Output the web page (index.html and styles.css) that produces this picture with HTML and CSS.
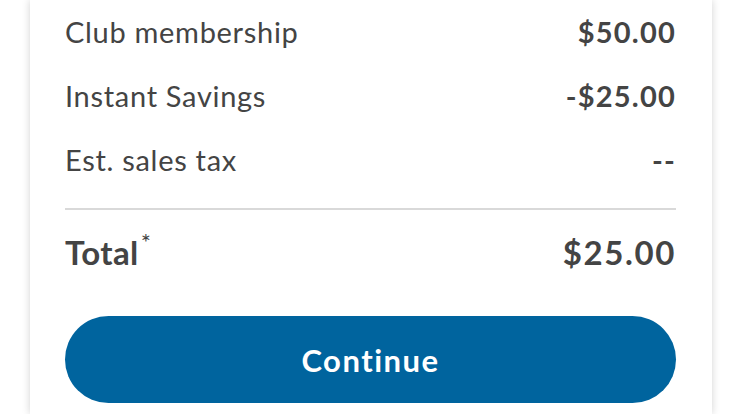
FILE: index.html
```html
<!DOCTYPE html>
<html>
<head>
<meta charset="utf-8">
<link rel="stylesheet" href="styles.css">
</head>
<body>
<div class="card">
  <div class="row"><span class="label">Club membership</span><span class="value">$50.00</span></div>
  <div class="row"><span class="label">Instant Savings</span><span class="value">-$25.00</span></div>
  <div class="row"><span class="label">Est. sales tax</span><span class="value">--</span></div>
  <div class="divider"></div>
  <div class="row total"><span class="label">Total<sup class="ast">*</sup></span><span class="value">$25.00</span></div>
  <button class="btn">Continue</button>
</div>
</body>
</html>
```
FILE: styles.css
```css
html, body {
  margin: 0;
  padding: 0;
  background: #fff;
}
body {
  font-family: Lato, "Open Sans", sans-serif;
  color: #444;
  overflow: hidden;
}
.card {
  margin-left: 30px;
  width: 682px;
  height: 414px;
  box-sizing: border-box;
  padding: 0 36px 0 35px;
  background: #fff;
  box-shadow: 0 0 8px rgba(0, 0, 0, 0.18);
  display: flex;
  flex-direction: column;
}
.row {
  display: flex;
  justify-content: space-between;
  align-items: baseline;
  font-size: 29px;
  line-height: 64px;
}
.label {
  letter-spacing: 0.7px;
}
.value {
  font-weight: 700;
  letter-spacing: 1.2px;
}
.divider {
  height: 2px;
  background: #d9d9d9;
  margin-top: 16px;
}
.total {
  margin-top: 14px;
  font-size: 33px;
  line-height: 56px;
  font-weight: 700;
}
.total .label {
  letter-spacing: 0.4px;
}
.total .value {
  letter-spacing: 1.6px;
}
.ast {
  font-size: 24px;
  font-weight: 400;
  color: #444;
  vertical-align: top;
  line-height: 1;
  position: relative;
  top: 6px;
  margin-left: 2px;
}
.btn {
  margin-top: 36px;
  height: 87px;
  flex-shrink: 0;
  border: none;
  border-radius: 44px;
  background: #00649e;
  color: #fff;
  font-family: Lato, "Open Sans", sans-serif;
  font-weight: 700;
  font-size: 31px;
  letter-spacing: 1.5px;
  padding: 0;
}
```
